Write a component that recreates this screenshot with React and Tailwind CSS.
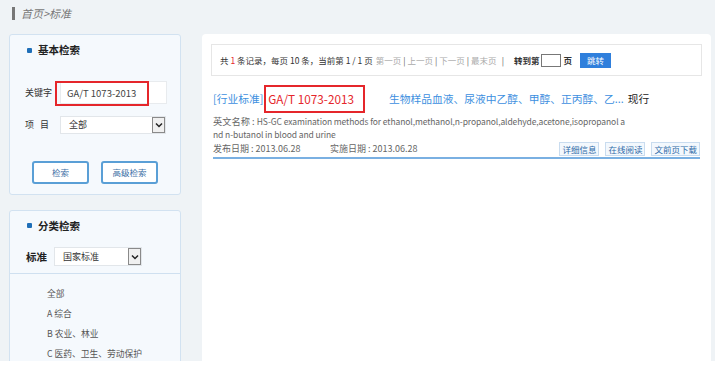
import React from 'react';

const font = { fontFamily: '"Noto Sans CJK SC", "Noto Sans", sans-serif' };

function Bullet() {
  return <span className="inline-block w-[5px] h-[5px] bg-[#1f6fb8] rounded-[1px]" />;
}

function SelectBox({ value, className }) {
  return (
    <div className={`flex items-stretch bg-white border border-[#e2e6ea] ${className}`}>
      <span className="flex-1 flex items-center pl-[8px] text-[9px] text-[#333]">{value}</span>
      <span className="w-[13px] flex items-center justify-center border border-[#8a8a8a] bg-[#f0f0f0]">
        <svg width="8" height="6" viewBox="0 0 8 6">
          <path d="M1 1.5 L4 4.5 L7 1.5" stroke="#222" strokeWidth="1.5" fill="none" />
        </svg>
      </span>
    </div>
  );
}

function LeftPanel() {
  const cats = ['全部', 'A 综合', 'B 农业、林业', 'C 医药、卫生、劳动保护'];
  return (
    <div className="w-[172px] flex flex-col gap-[15px]">
      <div className="h-[161px] bg-[#f5f9fd] border border-[#d2e2f1] rounded-[3px] flex flex-col">
        <div className="flex items-center gap-[6px] pl-[17px] pt-[6px] h-[24px]">
          <Bullet />
          <span className="text-[10.5px] font-bold text-[#222]">基本检索</span>
        </div>
        <div className="flex items-center mt-[22px] pl-[15px]">
          <span className="text-[9px] text-[#333] w-[35px]">关键字</span>
          <div className="relative w-[107px] h-[23px] bg-white border border-[#e8ebee]">
            <div className="absolute left-[-6px] top-[-1px] w-[94px] h-[25px] border-2 border-[#e5262b] flex items-center pl-[10px] text-[9.5px] text-[#444]">
              GA/T 1073-2013
            </div>
          </div>
        </div>
        <div className="flex items-center mt-[12px] pl-[15px]">
          <span className="text-[9px] text-[#333] w-[35px]">项&nbsp;&nbsp;&nbsp;目</span>
          <SelectBox value="全部" className="w-[106px] h-[18px]" />
        </div>
        <div className="flex gap-[12px] pl-[22px] mt-[27px]">
          <button className="w-[57px] h-[23px] border-2 border-[#5a9fd6] rounded-[3px] bg-white text-[8.5px] text-[#3a6ea5]">检索</button>
          <button className="w-[57px] h-[23px] border-2 border-[#5a9fd6] rounded-[3px] bg-white text-[8.5px] text-[#3a6ea5]">高级检索</button>
        </div>
      </div>
      <div className="h-[200px] bg-[#f5f9fd] border border-[#d2e2f1] rounded-[3px] flex flex-col">
        <div className="flex items-center gap-[6px] pl-[17px] pt-[5px] h-[24px]">
          <Bullet />
          <span className="text-[10.5px] font-bold text-[#222]">分类检索</span>
        </div>
        <div className="flex items-center pl-[16px] mt-[12px] h-[19px]">
          <span className="text-[10.5px] font-bold text-[#222] w-[28px]">标准</span>
          <SelectBox value="国家标准" className="w-[88px] h-[19px]" />
        </div>
        <div className="border-t border-[#cfe0f0] mt-[7px]" />
        <div className="flex flex-col pl-[37px] pt-[12px] gap-[5px]">
          {cats.map((c) => (
            <span key={c} className="text-[8.75px] leading-[15px] text-[#555]">{c}</span>
          ))}
        </div>
      </div>
    </div>
  );
}

function Pager() {
  return (
    <div className="h-[32px] border border-[#e6e6e6] flex items-center pl-[8px] text-[8.5px] text-[#333] whitespace-nowrap">
      <span>共 <span className="text-[#e5262b]">1</span> 条记录，每页 10 条，当前第 1 / 1 页</span>
      <span className="ml-[3px] text-[#aaa]">第一页</span>
      <span className="mx-[2px] text-[#555]">|</span>
      <span className="text-[#aaa]">上一页</span>
      <span className="mx-[2px] text-[#555]">|</span>
      <span className="text-[#aaa]">下一页</span>
      <span className="mx-[2px] text-[#555]">|</span>
      <span className="text-[#aaa]">最末页</span>
      <span className="ml-[5px] text-[#555]">|</span>
      <span className="ml-[10px] font-bold">转到第</span>
      <span className="w-[20px] h-[13px] border border-[#777] bg-white mx-[2px]" />
      <span className="font-bold">页</span>
      <span className="ml-[8px] w-[31px] h-[15px] bg-[#2f7fdc] text-white flex items-center justify-center">跳转</span>
    </div>
  );
}

function Result() {
  return (
    <div className="mt-[11px] px-[2px]">
      <div className="flex items-center h-[24px] text-[10.75px] whitespace-nowrap">
        <span className="text-[#3d8fe0]">[行业标准]</span>
        <span className="relative ml-[5px] text-[#e5262b] text-[11.75px]">
          GA/T 1073-2013
          <span className="absolute left-[-4px] right-[-11px] top-[-5px] bottom-[-5px] border-2 border-[#e5262b]" />
        </span>
        <span className="ml-[35px] text-[#3d8fe0]">生物样品血液、尿液中乙醇、甲醇、正丙醇、乙...</span>
        <span className="ml-[4px] text-[#222]">现行</span>
      </div>
      <div className="mt-[4px] w-[415px] text-[9.25px] leading-[13px] text-[#666] break-all">
        英文名称 : <span className="text-[8.5px] leading-[13px] tracking-[-0.1px]">HS-GC examination methods for ethanol,methanol,n-propanol,aldehyde,acetone,isopropanol and n-butanol in blood and urine</span>
      </div>
      <div className="flex items-end h-[15px] text-[9px] text-[#666]">
        <span className="w-[117px] self-center">发布日期 : 2013.06.28</span>
        <span className="self-center">实施日期 : 2013.06.28</span>
        <div className="ml-auto flex gap-[6px]">
          {['详细信息', '在线阅读', '文前页下载'].map((t) => (
            <span key={t} className="h-[14px] px-[2px] border border-[#c9dcef] bg-[#f3f8fd] text-[8.5px] text-[#2e6aa8] flex items-center">{t}</span>
          ))}
        </div>
      </div>
      <div className="border-t-2 border-[#7ab0e2] mt-[1px]" />
    </div>
  );
}

export default function App() {
  return (
    <div style={font} className="w-[715px] h-[361px] bg-[#eff3f6] overflow-hidden flex flex-col">
      <div className="shrink-0 flex items-center h-[33px] pl-[12px] pb-[6px]">
        <span className="w-[3px] h-[13px] bg-[#777]" />
        <span className="ml-[6px] text-[11px] italic text-[#777]">首页&gt;标准</span>
      </div>
      <div className="shrink-0 flex pl-[9px] mt-[1px]">
        <LeftPanel />
        <div className="ml-[21px] w-[509px] h-[400px] bg-white rounded-[4px] px-[9px] pt-[10px]">
          <Pager />
          <Result />
        </div>
      </div>
    </div>
  );
}
